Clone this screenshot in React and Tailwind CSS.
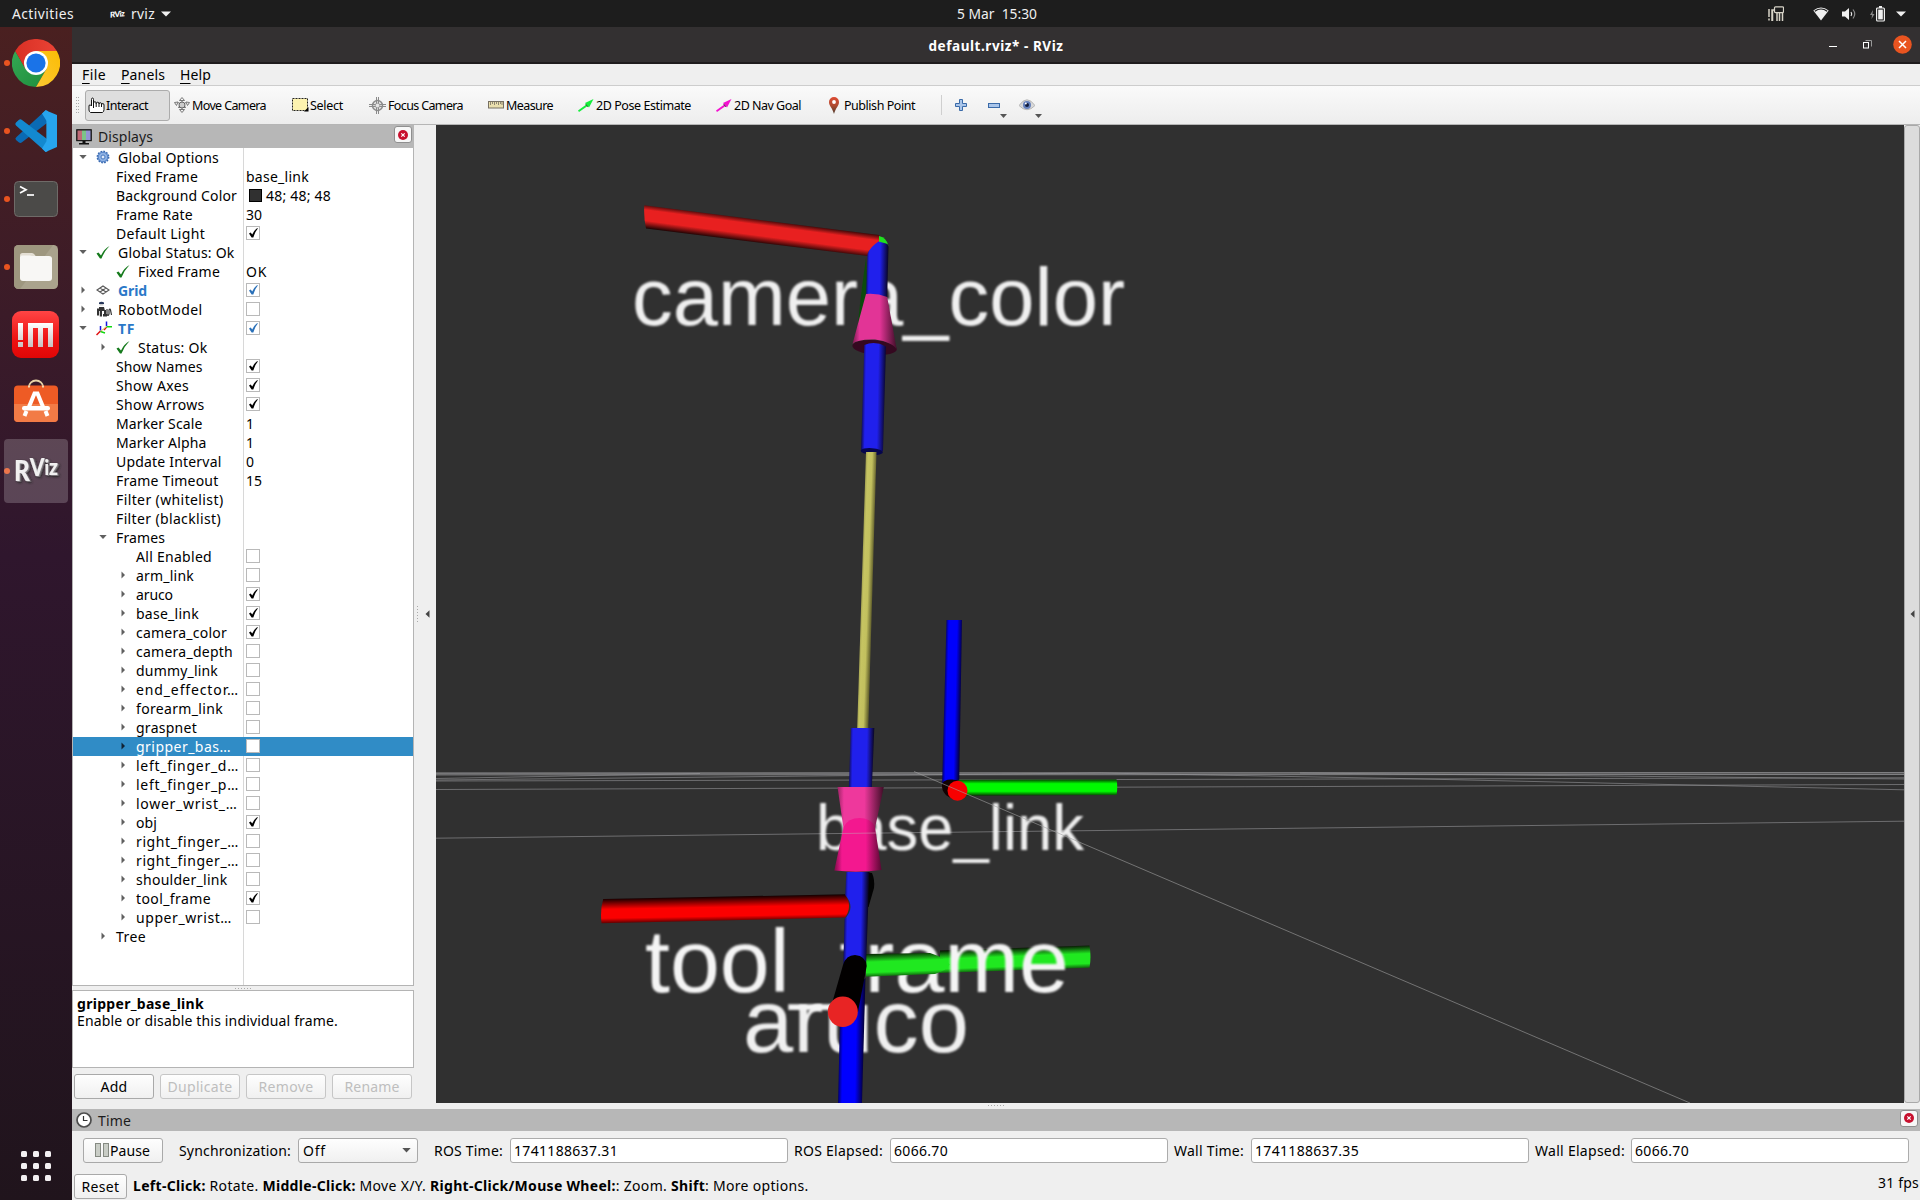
import { useLayoutEffect, useRef } from "react";

/* A single line of text tracked so that it takes exactly `w` pixels. */
function T({ w, children, className = "" }) {
  const ref = useRef(null);
  useLayoutEffect(() => {
    const el = ref.current;
    el.style.letterSpacing = "0px";
    const natural = el.getBoundingClientRect().width;
    const n = el.textContent.length;
    el.style.letterSpacing = `${(w - natural) / n}px`;
  }, [w, children]);
  return (
    <span ref={ref} className={`inline-block shrink-0 whitespace-pre ${className}`}>
      {children}
    </span>
  );
}

/* ---------- top bar ---------- */
function TopBar() {
  return (
    <header className="flex h-[27px] shrink-0 items-center bg-[#1d1d1d] text-[13.8px] leading-[27px] text-[#f0f0f0]">
      <div className="flex flex-1 items-center pl-3">
        <T w={62}>Activities</T>
        <span className="ml-9 mr-[7px] flex w-[14px] -skew-y-6 font-[Lato] text-[8px] font-black leading-[10px] tracking-[-0.6px] text-white">RViz</span>
        <T w={24}>rviz</T>
        <svg className="ml-1.5" width="10" height="6" viewBox="0 0 10 6"><path d="M0 0.5h10L5 5.5z" fill="#f0f0f0" /></svg>
      </div>
      <T w={80} className="ml-[76px]">{"5 Mar  15:30"}</T>
      <div className="flex flex-1 items-center justify-end pr-[14px]">
        <svg className="mr-[29px]" width="16" height="16" viewBox="0 0 16 16">
          <path d="M1 3v8M1 12.500v2M4 15V4h3M4.500 4v11M9 7v8M11.500 7v8M14.500 7v8" stroke="#d8d4c8" strokeWidth="1.500" fill="none" />
          <rect x="6.500" y="0.800" width="9" height="5.800" rx="1" stroke="#d8d4c8" fill="#1d1d1d" strokeWidth="1.200" />
        </svg>
        <svg className="mr-[13px]" width="16" height="14" viewBox="0 0 16 14">
          <path d="M8 13.500L0.300 3.500Q8 -2.500 15.700 3.500z" fill="#f0f0f0" />
          <path d="M1.800 4.300Q8 -0.300 14.200 4.300" stroke="#1d1d1d" strokeWidth="1.200" fill="none" />
        </svg>
        <svg className="mr-[13px]" width="15" height="14" viewBox="0 0 15 14">
          <path d="M0 4.500h3L7 1v12L3 9.500H0z" fill="#f0f0f0" />
          <path d="M9 5q1.500 2 0 4" stroke="#f0f0f0" strokeWidth="1.200" fill="none" />
          <path d="M11 2.500q3.500 4.500 0 9" stroke="#8a8a8a" strokeWidth="1.200" fill="none" />
        </svg>
        <svg className="mr-[11px]" width="15" height="16" viewBox="0 0 15 16">
          <path d="M3 4L0 9h2l-.5 4L4.500 8h-2z" fill="#8a8a8a" />
          <rect x="6.600" y="2" width="7.800" height="13" rx="1" stroke="#f0f0f0" strokeWidth="1.200" fill="none" />
          <rect x="9" y="0" width="3" height="2" fill="#f0f0f0" />
          <rect x="8.200" y="3.600" width="4.600" height="9.800" fill="#f0f0f0" />
        </svg>
        <svg width="10" height="6" viewBox="0 0 10 6"><path d="M0 0.500h10L5 5.500z" fill="#f0f0f0" /></svg>
      </div>
    </header>
  );
}

/* ---------- launcher ---------- */
function ChromeIcon() {
  return (
    <svg width="48" height="48" viewBox="0 0 48 48">
      <defs>
        <linearGradient id="cr" x1="0" x2="1"><stop offset="0" stopColor="#d93025" /><stop offset="1" stopColor="#ea4335" /></linearGradient>
        <linearGradient id="cg" x1="0" y1="0" x2="1" y2="1"><stop offset="0" stopColor="#34a853" /><stop offset="1" stopColor="#1e8e3e" /></linearGradient>
        <linearGradient id="cy" x1="0" y1="1" x2="1" y2="0"><stop offset="0" stopColor="#fcc934" /><stop offset="1" stopColor="#fbbc04" /></linearGradient>
      </defs>
      <path d="M24 24L13.600 30 3.200 12A24 24 0 0 0 24 48L34.400 30z" fill="url(#cg)" />
      <path d="M24 12H44.800A24 24 0 0 1 24 48L34.400 30z" fill="url(#cy)" />
      <path d="M24 12H44.800A24 24 0 0 0 3.200 12L13.600 30z" fill="url(#cr)" />
      <circle cx="24" cy="24" r="12" fill="#fff" />
      <circle cx="24" cy="24" r="9.600" fill="#1a73e8" />
    </svg>
  );
}

function CodeIcon() {
  return (
    <svg width="44" height="44" viewBox="0 0 44 44">
      <path d="M32 1L2.500 28Q0.500 29.500 2 31L5 33.500Q6.500 34.500 8 33.300L33 14z" fill="#0a6ab4" />
      <path d="M8 11Q6.500 9.800 5 10.800L2 13.400Q0.500 15 2 16.500L32 43 33 30z" fill="#1389cf" />
      <path d="M31.500 1.200L43 6v32L31.500 43Q33 41.500 32.600 38V6Q33 2.500 31.500 1.200z" fill="#27a5ee" />
      <path d="M31.500 1.200L28 4.500 32.600 12V32L28 39.500 31.500 43 34 42V2z" fill="#27a5ee" />
    </svg>
  );
}

function TerminalIcon() {
  return (
    <svg width="44" height="36" viewBox="0 0 44 36">
      <rect x="0.500" y="0.500" width="43" height="35" rx="4" fill="#4b4a48" stroke="#6f6b68" />
      <path d="M6 5.500l6 3.200-6 3.200" stroke="#fff" strokeWidth="1.700" fill="none" />
      <path d="M13 14h7" stroke="#fff" strokeWidth="1.700" />
    </svg>
  );
}

function FilesIcon() {
  return (
    <svg width="44" height="44" viewBox="0 0 44 44">
      <rect width="44" height="44" rx="4.500" fill="#aaa38d" />
      <path d="M4.500 0H39L6 44H4.500A4.500 4.500 0 0 1 0 39.500V4.500A4.500 4.500 0 0 1 4.500 0z" fill="#9b937c" opacity=".8" />
      <path d="M6 10.500Q6 8 8.500 8h9.500q1.500 0 2.500 1.500l1.500 2H6z" fill="#e4dfd4" />
      <rect x="6" y="11" width="32" height="25" rx="3" fill="#f8f7f5" />
      <path d="M6 20V12q0-1.500 2-1.500h8q2 0 3.500 1.500H35q3 0 3 3v5z" fill="#f8f7f5" />
    </svg>
  );
}

function ImIcon() {
  return (
    <svg width="47" height="47" viewBox="0 0 47 47">
      <defs>
        <linearGradient id="im" x1="0" x2="0" y1="0" y2="1"><stop offset="0" stopColor="#ff4545" /><stop offset=".6" stopColor="#ee1212" /><stop offset="1" stopColor="#e00606" /></linearGradient>
        <linearGradient id="im2" x1="0" x2="0" y1="0" y2="1"><stop offset="0" stopColor="#fff" /><stop offset="1" stopColor="#c8c0c0" /></linearGradient>
      </defs>
      <rect width="47" height="47" rx="9" fill="url(#im)" />
      <path d="M6 12h5v17H6zM6 31h5v5H6zM16 12h25v24h-5V17h-5v19h-5V17h-5v19h-5z" fill="url(#im2)" />
    </svg>
  );
}

function StoreIcon() {
  return (
    <svg width="46" height="44" viewBox="0 0 46 44">
      <path d="M16 8a7 6.500 0 0 1 14 0" stroke="#e8d3a6" strokeWidth="1.800" fill="none" />
      <rect x="1" y="6.500" width="44" height="36.500" rx="4" fill="#ee5b25" />
      <path d="M1 25h44v14a4 4 0 0 1-4 4H5a4 4 0 0 1-4-4z" fill="#f27b46" />
      <path d="M16 8.500V6.500M30 8.500V6.500" stroke="#f6e6c0" strokeWidth="1.800" />
      <path d="M15.500 29L21.500 14.500h3L30.500 29M13.500 32l-2 5M32.500 32l2 5" stroke="#fff" strokeWidth="4" fill="none" />
      <rect x="9" y="27" width="28" height="4.500" rx="2.200" fill="#fff" />
    </svg>
  );
}

function RvizIcon() {
  return (
    <svg width="52" height="36" viewBox="0 0 52 36">
      <defs>
        <filter id="rvshade" x="-10%" y="-10%" width="130%" height="130%">
          <feDropShadow dx="1.300" dy="0.800" stdDeviation="0.300" floodColor="#858085" />
          <feDropShadow dx="1" dy="1" stdDeviation="0.800" floodColor="#222" />
        </filter>
      </defs>
      <text x="4" y="28" fontFamily="Lato, sans-serif" fontWeight="900" fontSize="29" fill="#f0f0f0" textLength="44" lengthAdjust="spacingAndGlyphs" filter="url(#rvshade)">
        R<tspan dy="-5" fontSize="25">V</tspan><tspan dy="-1" fontSize="21">i</tspan><tspan fontSize="23">z</tspan>
      </text>
    </svg>
  );
}

function Launch({ dot = true, children }) {
  return (
    <div className="flex h-[68px] w-[72px] shrink-0 items-center">
      <span className={`ml-1 h-1.5 w-1.5 shrink-0 rounded-full ${dot ? "bg-[#e95420]" : ""}`} />
      <div className="-ml-[10px] flex w-[72px] shrink-0 justify-center">{children}</div>
    </div>
  );
}

function Sidebar() {
  return (
    <aside className="flex w-[72px] shrink-0 flex-col bg-linear-to-b from-[#4a2020] via-[#2f162d] via-45% to-[#20141c] pt-[2px]">
      <Launch><ChromeIcon /></Launch>
      <Launch><CodeIcon /></Launch>
      <Launch><TerminalIcon /></Launch>
      <Launch><FilesIcon /></Launch>
      <Launch dot={false}><div className="mr-px mb-px"><ImIcon /></div></Launch>
      <Launch dot={false}><div className="mb-1"><StoreIcon /></div></Launch>
      <Launch>
        <div className="flex h-16 w-16 items-center justify-center rounded bg-white/20"><RvizIcon /></div>
      </Launch>
      <div className="mt-auto mb-[19px] ml-[21px] grid w-[30px] grid-cols-3 gap-1.5">
        {Array.from({ length: 9 }, (_, i) => <span key={i} className="h-1.5 w-1.5 rounded-[1.5px] bg-[#f3f0f2]" />)}
      </div>
    </aside>
  );
}

/* ---------- window chrome ---------- */
function TitleBar() {
  return (
    <div className="flex h-[37px] shrink-0 items-center border-b-2 border-[#1f1c1d] bg-[#333031] text-white">
      <div className="flex flex-1 pl-[8.500px]" />
      <T w={135} className="mt-0.5 text-[13.500px] font-bold leading-[34px]">default.rviz* - RViz</T>
      <div className="flex flex-1 items-center justify-end pr-[8.500px]">
        <span className="mr-[26px] mt-1 h-px w-2 bg-white" />
        <svg className="mr-[20.500px]" width="9" height="9" viewBox="0 0 9 9">
          <path d="M2.500 .5h6v6" stroke="#999" fill="none" />
          <rect x="0.500" y="2.500" width="5" height="5.500" stroke="#fff" fill="none" />
        </svg>
        <svg width="19" height="19" viewBox="0 0 19 19">
          <circle cx="9.500" cy="9.500" r="9.300" fill="#e95420" />
          <path d="M6 6l7 7M13 6l-7 7" stroke="#fff" strokeWidth="1.500" />
        </svg>
      </div>
    </div>
  );
}

function MenuItem({ w, first, rest }) {
  return <T w={w}><span className="underline decoration-1 underline-offset-[3px]">{first}</span>{rest}</T>;
}

function MenuBar() {
  return (
    <nav className="flex h-[22px] shrink-0 items-center gap-[15px] border-b border-[#cdcdcd] bg-[#efefef] pl-[10px] text-[14px] leading-[21px]">
      <MenuItem w={24} first="F" rest="ile" />
      <MenuItem w={44} first="P" rest="anels" />
      <MenuItem w={31} first="H" rest="elp" />
    </nav>
  );
}

const HandIcon = () => (
  <svg width="17" height="17" viewBox="0 0 17 17"><path d="M5.500 11V2.500q0-1.500-1-1.500t-1 1.500V9L2.500 8Q1 7.500 1 9v4q0 1.500 1.500 2.500h12q1.500-1 1.500-3V8q0-1.500-1.200-1.500T13.500 8V7q0-1.300-1.200-1.300T11 7V6.500q0-1.300-1.200-1.300T8.200 6.500V6q0-1.200-1.200-1.200T5.700 5.500M8.200 6v4M11 6.500v3.500M13.500 7.500V10" fill="#fff" stroke="#111" strokeWidth="1" /></svg>
);
const MoveIcon = () => (
  <svg width="16" height="16" viewBox="0 0 16 16"><path d="M8 .5L10.500 3.500H5.500zM8 15.500L5.500 12.500h5zM.5 5.500L4 5 2.500 8.500zM15.500 5.500L12 5l1.500 3.500zM4 5.500l8 5M12 5.500l-8 5M8 3.500v9M4.500 10.500h7" fill="none" stroke="#777" /><circle cx="8" cy="8" r="3" fill="#ccc" stroke="#666" /></svg>
);
const SelectIcon = () => (
  <svg width="17" height="14" viewBox="0 0 17 14"><rect x=".5" y=".5" width="15" height="12" fill="#fdf3b0" stroke="#222" strokeDasharray="2 1" /><path d="M12 13.500h4.500V9z" fill="#000" /></svg>
);
const FocusIcon = () => (
  <svg width="17" height="17" viewBox="0 0 17 17"><g stroke="#8a8a8a" fill="none"><circle cx="8.500" cy="8.500" r="5" strokeWidth="1.500" fill="#e6e6e6" /><circle cx="8.500" cy="8.500" r="2.300" stroke="#999" /><path d="M7.500 0v6M9.500 0v6M7.500 11v6M9.500 11v6M0 7.500h6M0 9.500h6M11 7.500h6M11 9.500h6" /></g></svg>
);
const MeasureIcon = () => (
  <svg width="16" height="8" viewBox="0 0 16 8"><rect x=".5" y=".5" width="15" height="6.500" fill="#eadfae" stroke="#777062" /><path d="M2.500 1v3M4.500 1v2M6.500 1v3M8.500 1v2M10.500 1v3M12.500 1v2M14 1v3" stroke="#777062" strokeWidth=".8" /></svg>
);
const ArrowIcon = ({ color }) => (
  <svg width="16" height="13" viewBox="0 0 16 13"><path d="M15.500 0L7 4l1.300 1.500L0 11.500 1 13 9.700 7 11 8.500z" fill={color} /><path d="M7.500 5l2.500 3" stroke="#1a3a1a" strokeWidth=".7" /></svg>
);
const PinIcon = () => (
  <svg width="12" height="17" viewBox="0 0 12 17"><defs><linearGradient id="pin" x1="0" x2="0" y1="0" y2="1"><stop offset="0" stopColor="#dd4b33" /><stop offset=".5" stopColor="#b04a30" /><stop offset="1" stopColor="#4a3a2c" /></linearGradient></defs><path d="M6 0a5 5 0 0 1 5 5c0 4-3.500 6-5 12C4.500 11 1 9 1 5a5 5 0 0 1 5-5z" fill="url(#pin)" /><circle cx="6" cy="5" r="1.900" fill="#fff" /></svg>
);
const DropMark = ({ className }) => <svg className={`absolute -right-[7px] ${className}`} width="7" height="4" viewBox="0 0 7 4"><path d="M0 0h7L3.500 4z" fill="#555" /></svg>;

function Tool({ icon, w, label, className, gap = "gap-0.5" }) {
  return <div className={`flex shrink-0 items-center ${gap} ${className}`}>{icon}<T w={w} className="mt-0.5">{label}</T></div>;
}

function ToolBar() {
  return (
    <div className="flex h-[39px] shrink-0 items-center border-b border-[#b5b5b5] bg-linear-to-b from-[#fafafa] to-[#ededed] pl-[4px] text-[12.500px]">
      <div className="grid grid-cols-2 gap-x-[1px] gap-y-[2px]">
        {Array.from({ length: 12 }, (_, i) => <span key={i} className="h-px w-px bg-[#aaa]" />)}
      </div>
      <div className="ml-1.5 flex h-[31px] w-[85px] items-center gap-[1px] rounded-[3px] border border-[#acacac] bg-[#dedede] pl-0.5"><HandIcon /><T w={42} className="mt-0.5">Interact</T></div>
      <Tool className="ml-1 w-[118px]" icon={<MoveIcon />} w={74} label="Move Camera" />
      <Tool className="w-[77px]" gap="gap-[1px]" icon={<SelectIcon />} w={33} label="Select" />
      <Tool className="w-[119px]" icon={<FocusIcon />} w={75} label="Focus Camera" />
      <Tool className="w-[90px]" icon={<MeasureIcon />} w={47} label="Measure" />
      <Tool className="w-[138px]" icon={<ArrowIcon color="#16ee3c" />} w={95} label="2D Pose Estimate" />
      <Tool className="w-[112px]" icon={<ArrowIcon color="#f312cf" />} w={67} label="2D Nav Goal" />
      <Tool className="w-[113px]" gap="gap-1" icon={<PinIcon />} w={71} label="Publish Point" />
      <span className="h-5 w-px bg-[#cfcfcf]" />
      <svg className="ml-[13px]" width="12" height="12" viewBox="0 0 12 12"><path d="M4.500 .5h3v4h4v3h-4v4h-3v-4h-4v-3h4z" fill="#a9c5ea" stroke="#3a6aa8" /></svg>
      <div className="relative ml-[21px]"><svg width="12" height="5" viewBox="0 0 12 5"><rect x=".5" y=".5" width="11" height="4" fill="#a9c5ea" stroke="#3a6aa8" /></svg><DropMark className="-bottom-[10px]" /></div>
      <div className="relative ml-[19px]">
        <svg width="16" height="12" viewBox="0 0 16 12"><path d="M0 6.500Q8-5 16 6.500 8 15 0 6.500z" fill="#d9d9d9" stroke="#a5a5a5" strokeWidth=".7" /><circle cx="8" cy="6" r="4" fill="#6480bc" /><circle cx="8" cy="6" r="2" fill="#111c3c" /><circle cx="6.800" cy="4.500" r="1" fill="#fff" /></svg>
        <DropMark className="-bottom-[7px]" />
      </div>
    </div>
  );
}

/* ---------- displays tree ---------- */
const GearIcon = () => (
  <svg width="14" height="14" viewBox="0 0 14 14"><circle cx="7" cy="7" r="5.600" fill="#8fb2e4" stroke="#3a6ab0" strokeWidth="1.600" strokeDasharray="1.700 1.200" /><circle cx="7" cy="7" r="4.700" fill="#8fb2e4" stroke="#4a7ac0" strokeWidth=".8" /><circle cx="7" cy="7" r="2" fill="#dfeafa" stroke="#4a7ac0" /></svg>
);
const OkIcon = () => (
  <svg width="14" height="13" viewBox="0 0 14 13"><path d="M.5 7.500L2.500 6.500 5 9.500Q8 3 13.500 0 8.500 5 5.500 12.500H4z" fill="#157a1c" /></svg>
);
const GridIcon = () => (
  <svg width="14" height="10" viewBox="0 0 14 10"><path d="M7 1l6 4-6 4-6-4zM4 3l6 4M10 3L4 7" fill="none" stroke="#555" strokeWidth="1.100" /></svg>
);
const RobotIcon = () => (
  <svg width="16" height="16" viewBox="0 0 16 16"><path d="M3 1.500Q5.500 0 8 1.500V3H3z" fill="#26365a" /><path d="M3.500 3h4v1.500h-4z" fill="#ccc" /><path d="M3 6h5l1 4H3zM1 7.500h2v7H1zM3.800 10H6v5.500H3.800zM8 9h2v4H8zM7 13h4v2.500H7z" fill="#333" /><path d="M11 8v5q1 3 2 0V9q1-2 1.500 0L15.500 14" stroke="#333" strokeWidth="1.200" fill="none" /></svg>
);
const TfIcon = () => (
  <svg width="16" height="15" viewBox="0 0 16 15"><path d="M4.500 9.500V5M10.500 5V.5" stroke="#1515e0" strokeWidth="1.500" /><path d="M4.500 10L.5 14M10.500 6L8 9" stroke="#e01010" strokeWidth="1.500" /><path d="M4.500 10.500l4.500 1.500M10.500 5.700h5.500" stroke="#10d810" strokeWidth="1.500" /><path d="M5 10l5-4" stroke="#d8c860" strokeWidth="1" /></svg>
);
const icons = { gear: GearIcon, ok: OkIcon, grid: GridIcon, robot: RobotIcon, tf: TfIcon };

// [level, marker (o open, c closed, - none), icon, label, width, value, blue]
const rows = [
  [0, "o", "gear", "Global Options", 101],
  [1, "-", "", "Fixed Frame", 82, ["base_link", 63]],
  [1, "-", "", "Background Color", 121, ["48; 48; 48", 65, true]],
  [1, "-", "", "Frame Rate", 77, ["30", 16]],
  [1, "-", "", "Default Light", 89, true],
  [0, "o", "ok", "Global Status: Ok", 116.5],
  [1, "-", "ok", "Fixed Frame", 82, ["OK", 21]],
  [0, "c", "grid", "Grid", 29, true, true],
  [0, "c", "robot", "RobotModel", 84.5, false],
  [0, "o", "tf", "TF", 17, true, true],
  [1, "c", "ok", "Status: Ok", 69.5],
  [1, "-", "", "Show Names", 86.5, true],
  [1, "-", "", "Show Axes", 73, true],
  [1, "-", "", "Show Arrows", 88.5, true],
  [1, "-", "", "Marker Scale", 86.5, ["1", 8]],
  [1, "-", "", "Marker Alpha", 90.5, ["1", 8]],
  [1, "-", "", "Update Interval", 105.5, ["0", 8]],
  [1, "-", "", "Frame Timeout", 102.5, ["15", 16]],
  [1, "-", "", "Filter (whitelist)", 107.5],
  [1, "-", "", "Filter (blacklist)", 105],
  [1, "o", "", "Frames", 49],
  [2, "-", "", "All Enabled", 76, false],
  [2, "c", "", "arm_link", 58, false],
  [2, "c", "", "aruco", 37, true],
  [2, "c", "", "base_link", 63, true],
  [2, "c", "", "camera_color", 91, true],
  [2, "c", "", "camera_depth", 97, false],
  [2, "c", "", "dummy_link", 82, false],
  [2, "c", "", "end_effector…", 103, false],
  [2, "c", "", "forearm_link", 87, false],
  [2, "c", "", "graspnet", 61, false],
  [2, "c", "", "gripper_bas…", 95, false],
  [2, "c", "", "left_finger_d…", 103, false],
  [2, "c", "", "left_finger_p…", 103, false],
  [2, "c", "", "lower_wrist_…", 101.5, false],
  [2, "c", "", "obj", 21, true],
  [2, "c", "", "right_finger_…", 103, false],
  [2, "c", "", "right_finger_…", 103, false],
  [2, "c", "", "shoulder_link", 91.5, false],
  [2, "c", "", "tool_frame", 75, true],
  [2, "c", "", "upper_wrist…", 96, false],
  [1, "c", "", "Tree", 30],
];

const indent = ["w-[6px]", "w-[26px]", "w-[46px]"];

function Marker({ kind, dark }) {
  const fill = dark ? "#123" : "#606060";
  return (
    <svg className="shrink-0" width="8" height="8" viewBox="0 0 8 8">
      {kind === "o" && <path d="M.3 2h7.400L4 6z" fill={fill} />}
      {kind === "c" && <path d="M2.500 .5v7L6 4z" fill={fill} />}
    </svg>
  );
}

function Check({ on, blue }) {
  return (
    <span className="flex h-[14px] w-[14px] items-center justify-center border border-[#b9b9b9] bg-white">
      {on && <svg width="9" height="10" viewBox="0 0 9 10"><path d="M0 5.500L1.700 4.500 3.200 6.500Q5 2.500 8 .3H9Q6 4 4.300 9.500H2.600z" fill={blue ? "#2a70b8" : "#000"} /></svg>}
    </span>
  );
}

function Row({ r }) {
  const [level, kind, icon, label, w, value, blue] = r;
  const selected = label === "gripper_bas…";
  const Icon = icons[icon];
  return (
    <div className={`flex h-[19px] shrink-0 leading-[16px] ${selected ? "bg-[#308cc6] text-white" : ""}`}>
      <div className={`flex w-[171px] shrink-0 items-center border-r pb-px ${selected ? "border-[#308cc6]" : "border-[#d8d8d8]"}`}>
        <span className={`shrink-0 ${indent[level]}`} />
        <Marker kind={kind} dark={selected} />
        <span className="w-[9px] shrink-0" />
        {Icon && <span className="flex w-[22px] shrink-0 items-center"><Icon /></span>}
        <T w={w} className={blue ? "mt-0.5 font-bold text-[#2a78c8]" : "mt-0.5"}>{label}</T>
      </div>
      <div className="flex items-center pb-px pl-[2px]">
        {typeof value === "boolean" && <Check on={value} blue={blue} />}
        {Array.isArray(value) && (
          <>
            {value[2] && <span className="mr-[4px] ml-[3px] h-[13px] w-[13px] border border-black bg-[#303030]" />}
            <T w={value[1]} className="mt-0.5">{value[0]}</T>
          </>
        )}
      </div>
    </div>
  );
}

function DockClose() {
  return (
    <span className="flex h-[17px] w-[18px] items-center justify-center rounded-[3px] border border-[#8f8f8f] bg-[#f7f7f7]">
      <svg width="10" height="10" viewBox="0 0 10 10"><circle cx="5" cy="5" r="5" fill="#c8102e" /><path d="M3.300 3.300l3.400 3.400M6.700 3.300L3.300 6.700" stroke="#fff" strokeWidth="1.200" /></svg>
    </span>
  );
}

function Btn({ w, label, off, className = "" }) {
  return (
    <button className={`flex h-[25px] items-center justify-center rounded-[3px] border bg-linear-to-b from-[#fefefe] to-[#f0f0f0] leading-[22px] ${off ? "border-[#c6c6c6] text-[#bebebe]" : "border-[#a9a9a9]"} ${className}`}>
      <T w={w}>{label}</T>
    </button>
  );
}

const Dots = ({ className = "" }) => (
  <span className={`flex gap-[2px] ${className}`}>{Array.from({ length: 6 }, (_, i) => <i key={i} className="h-px w-px bg-[#aaa]" />)}</span>
);

function Displays() {
  return (
    <section className="flex w-[342px] shrink-0 flex-col pt-px">
      <div className="flex h-[23px] shrink-0 items-center bg-[#b7b7b7] pl-1 pr-[2px]">
        <svg width="16" height="16" viewBox="0 0 16 16">
          <rect x=".7" y=".7" width="14.600" height="11" fill="#222" stroke="#111" />
          <path d="M1.500 1.500h4.500v9.500H1.500z" fill="#c06a78" /><path d="M6 1.500h4v9.500H6z" fill="#7cc487" /><path d="M10 1.500h4.500v9.500H10z" fill="#9494d4" />
          <path d="M6.500 12h3v2h3.500v1.500H3V14h3.500z" fill="#111" />
        </svg>
        <T w={55} className="ml-1.5 text-[#1c1c1c]">Displays</T>
        <span className="ml-auto -mt-1"><DockClose /></span>
      </div>
      <div className="flex h-[838px] shrink-0 flex-col border border-t-0 border-[#b4b4b4] bg-white">
        {rows.map((r, i) => <Row key={i} r={r} />)}
        <div className="w-[171px] flex-1 border-r border-[#d8d8d8]" />
      </div>
      <div className="flex h-1 shrink-0 items-center justify-center"><Dots /></div>
      <div className="flex h-[78px] shrink-0 flex-col border border-[#b4b4b4] bg-white pl-1 pt-[4px] leading-[17px]">
        <T w={127} className="self-start font-bold">gripper_base_link</T>
        <T w={261} className="self-start">Enable or disable this individual frame.</T>
      </div>
      <div className="flex gap-1.5 pl-0.5 pt-1.5">
        <Btn className="w-20" w={27} label="Add" />
        <Btn className="w-20" w={65} label="Duplicate" off />
        <Btn className="w-20" w={55} label="Remove" off />
        <Btn className="w-20" w={55} label="Rename" off />
      </div>
    </section>
  );
}

/* ---------- 3D view ---------- */
/* Shading across a cylinder: dark rims and a lit band between `lo` and `hi`. */
function Along({ id, c, x1, y1, x2, y2, lo = 0.35, hi = 0.65 }) {
  return (
    <linearGradient id={id} gradientUnits="userSpaceOnUse" x1={x1} y1={y1} x2={x2} y2={y2}>
      <stop offset="0" stopColor="#050000" /><stop offset={lo} stopColor={c} /><stop offset={hi} stopColor={c} /><stop offset="1" stopColor="#050000" />
    </linearGradient>
  );
}

function Scene() {
  return (
    <svg className="block shrink-0" width="1468" height="978" viewBox="436 125 1468 978">
      <defs>
        <Along id="r1" c="#e82020" x1={757} y1={217} x2={753.500} y2={243.500} lo={0.280} hi={0.680} />
        <Along id="r2" c="#fb0000" x1={720} y1={896} x2={720.500} y2={924} lo={0.400} hi={0.720} />
        <Along id="g1" c="#20e820" x1={905} y1={951} x2={906} y2={979} lo={0.350} hi={0.720} />
        <Along id="g2" c="#20e820" x1={1030} y1={946.500} x2={1031} y2={973} lo={0.350} hi={0.720} />
        <Along id="g3" c="#00fa00" x1={1030} y1={778} x2={1030} y2={797} lo={0.300} hi={0.700} />
        <Along id="b1" c="#2020ec" x1={864} y1={270} x2={889.500} y2={270.500} lo={0.200} hi={0.620} />
        <Along id="b2" c="#2020ec" x1={860} y1={400} x2={887} y2={400.500} lo={0.200} hi={0.650} />
        <Along id="b3" c="#2020ec" x1={847} y1={757} x2={875} y2={757.500} lo={0.200} hi={0.700} />
        <Along id="b4" c="#2020ec" x1={842} y1={916} x2={869} y2={916.500} lo={0.200} hi={0.700} />
        <Along id="b5" c="#0000ff" x1={836} y1={1060} x2={866} y2={1060.500} lo={0.220} hi={0.650} />
        <Along id="b6" c="#0000fb" x1={942} y1={700} x2={962.500} y2={700.500} lo={0.250} hi={0.650} />
        <Along id="p1" c="#e23496" x1={845} y1={322} x2={903} y2={322} lo={0.250} hi={0.600} />
        <Along id="p2" c="#ee389c" x1={826} y1={806} x2={890} y2={806} lo={0.280} hi={0.600} />
        <Along id="p3" c="#f3188f" x1={826} y1={845} x2={890} y2={845} lo={0.250} hi={0.620} />
        <linearGradient id="y" gradientUnits="userSpaceOnUse" x1="-6" y1="0" x2="6" y2="0" gradientTransform="translate(866 590) skewX(-1.9)"><stop offset="0" stopColor="#8a8844" /><stop offset=".3" stopColor="#c6c462" /><stop offset=".65" stopColor="#c2c05e" /><stop offset="1" stopColor="#6a6830" /></linearGradient>
        <filter id="soft" x="-5%" y="-20%" width="110%" height="140%"><feGaussianBlur stdDeviation="0.9" /></filter>
      </defs>
      <rect x="436" y="125" width="1468" height="978" fill="#303030" />

      {/* ground grid */}
      <g stroke="#a0a0a4" fill="none" strokeOpacity=".55">
        <rect x="436" y="772" width="1468" height="3" fill="#a0a0a4" fillOpacity=".35" stroke="none" />
        <path d="M436 773.300L1904 772.500M436 775L1904 774.500M436 780L1100 773M436 781L1904 777.800M436 778.500L700 773.500" />
        <path d="M436 789.500L1904 784.500M1100 773L1400 778.500 1904 789.800M1300 773L1904 779M436 838.200L1904 821.200" />
      </g>

      <g fontFamily="Liberation Sans, sans-serif" fill="#efefef" filter="url(#soft)">
        <text x="632" y="325" fontSize="81" textLength="493" lengthAdjust="spacingAndGlyphs">camera_color</text>
        <text x="816" y="849.500" fontSize="64" textLength="268" lengthAdjust="spacingAndGlyphs">base_link</text>
        <text x="743" y="1051.500" fontSize="89" textLength="226" lengthAdjust="spacingAndGlyphs">aruco</text>
      </g>

      {/* base_link axes */}
      <path d="M946.500 620L962 620 959.200 782 942 787z" fill="url(#b6)" />
      <path d="M942 784Q944 779 952 779.500L962 781 958 800Q941 797 942 784z" fill="#120202" />
      <path d="M958 779.800L1116.500 779.300Q1118 787 1116.500 795L964 795.700z" fill="url(#g3)" />
      <circle cx="957.500" cy="790.700" r="10" fill="#f80000" />
      <path d="M914 771.500L1690 1103" stroke="#a0a0a0" strokeOpacity=".6" fill="none" />

      {/* camera_color axes and arrow */}
      <path d="M866 258L867.500 290 859 327 858 322Q862 285 866 258z" fill="#0c4a0c" />
      <path d="M644.300 205.300L879.300 235 879.300 242 867.500 256 646 228.500Q643.500 217 644.300 205.300z" fill="url(#r1)" />
      <path d="M879 236Q887 237.500 888.600 246.500L879 242.500z" fill="#20e020" />
      <path d="M867.500 254Q870 247 878.500 241.500L886 243.500Q889 244 888.500 247L887.200 297 866 295z" fill="url(#b1)" />
      <ellipse cx="874.600" cy="347.500" rx="22.300" ry="7.200" transform="rotate(5 874.600 347.500)" fill="#350820" />
      <path d="M866 294Q877 293 887.200 297L896.800 350Q893 342 875 339.500 857 339 852.500 344z" fill="url(#p1)" />
      <path d="M864.300 345Q875 340.500 886 346.500L883 451H861z" fill="url(#b2)" />
      <ellipse cx="871.800" cy="451.500" rx="11.200" ry="3.300" transform="rotate(4 871.800 451.500)" fill="#06064c" />
      <path d="M866 452L876.500 452 868.200 728 857.200 728z" fill="url(#y)" />
      <path d="M850.800 728L874.300 728 871.800 790 848.800 790z" fill="url(#b3)" />

      {/* tool_frame axes */}
      <path d="M866 872L872 873Q875 880 874 888L868.500 907H866z" fill="#030303" />
      <path d="M940 950.500L1089.500 945.500Q1091.500 957 1089.500 967.700L940 973z" fill="url(#g2)" />
      <g fontFamily="Liberation Sans, sans-serif" fill="#f4f4f4" filter="url(#soft)">
        <text x="645" y="991.500" fontSize="89" textLength="424" lengthAdjust="spacingAndGlyphs">tool_frame</text>
      </g>
      <path d="M865 954L930 953Q946 958 949.600 964.500 946 971 935 974L866 976.700z" fill="url(#g1)" />
      <path d="M603.200 899L845 894.300Q853 906 845 917.500L601.500 923.300Q600 910 603.200 899z" fill="url(#r2)" />
      <path d="M840.500 1000L865.500 978 862 1103H838z" fill="url(#b5)" />
      <path d="M846.300 872L869.400 872 866 968 843.200 968 844.500 919 Q850.500 913 850.500 907 850.500 901 845.200 895z" fill="url(#b4)" />

      <path d="M837.500 787L883.800 787 874.800 829 843.600 829z" fill="url(#p2)" />
      <path d="M843.600 827Q848 818 859.600 818 870 818 874.800 826L881.500 870Q858 873 834.300 870.500z" fill="url(#p3)" />
      <path d="M842 833.500L876 833" stroke="#d07aa8" strokeOpacity=".7" />
      <path d="M843 965Q846 955 855 955 866 956 866.700 966L858 1012H829.500z" fill="#020000" />
      <ellipse cx="842.800" cy="1011.700" rx="15" ry="15.300" fill="#e82424" />
    </svg>
  );
}

/* ---------- bottom panels ---------- */
function Field({ label, lw, value, vw, className }) {
  return (
    <div className={`flex shrink-0 items-center justify-between ${className}`}>
      <T w={lw}>{label}</T>
      <div className="flex h-[25px] w-[278px] items-center rounded-[3px] border border-[#acacac] bg-white pl-[3px] leading-[22px]"><T w={vw}>{value}</T></div>
    </div>
  );
}

function TimePanel() {
  return (
    <section className="flex shrink-0 flex-col">
      <div className="flex h-[22px] items-center bg-[#b7b7b7] pl-1 pr-0.5">
        <svg width="16" height="16" viewBox="0 0 16 16"><circle cx="8" cy="8" r="7" fill="#fff" stroke="#4c4c4c" strokeWidth="1.700" /><path d="M7.500 4v4.500h4" stroke="#333" strokeWidth="1.200" fill="none" /></svg>
        <T w={33} className="ml-1.5 text-[#1c1c1c]">Time</T>
        <span className="ml-auto -mt-1"><DockClose /></span>
      </div>
      <div className="flex h-[39px] items-center pl-[11px] leading-[24px]">
        <button className="flex h-[25px] w-20 items-center rounded-[3px] border border-[#a9a9a9] bg-linear-to-b from-[#fefefe] to-[#f0f0f0] pl-[11px] leading-[22px]">
          <svg width="15" height="15" viewBox="0 0 15 15"><g fill="#c9cdc6" stroke="#858a82"><rect x=".5" y=".5" width="5" height="13" /><rect x="8.500" y=".5" width="5" height="13" /></g></svg>
          <T w={40}>Pause</T>
        </button>
        <T w={112} className="ml-4">Synchronization:</T>
        <div className="ml-[7px] flex h-[25px] w-[120px] items-center justify-between rounded-[3px] border border-[#a9a9a9] bg-linear-to-b from-[#fefefe] to-[#f0f0f0] pl-1 pr-[6px] leading-[22px]">
          <T w={23}>Off</T>
          <svg width="9" height="5" viewBox="0 0 9 5"><path d="M.3 0h8.400L4.500 4.500z" fill="#555" /></svg>
        </div>
        <Field className="ml-4 w-[354px]" label="ROS Time:" lw={69} value="1741188637.31" vw={104} />
        <Field className="ml-1.5 w-[374px]" label="ROS Elapsed:" lw={89} value="6066.70" vw={54} />
        <Field className="ml-1.5 w-[355px]" label="Wall Time:" lw={70} value="1741188637.35" vw={104} />
        <Field className="ml-1.5 w-[374px]" label="Wall Elapsed:" lw={90} value="6066.70" vw={54} />
      </div>
    </section>
  );
}

function StatusBar() {
  return (
    <footer className="flex h-[30px] shrink-0 items-start pl-0.5 pt-1">
      <Btn className="w-[53px]" w={38} label="Reset" />
      <div className="ml-1.5 mt-0.5 flex leading-[20px]">
        <T w={675.500}><b>Left-Click:</b> Rotate. <b>Middle-Click:</b> Move X/Y. <b>Right-Click/Mouse Wheel:</b>: Zoom. <b>Shift</b>: More options.</T>
      </div>
      <T w={41} className="-mt-px ml-auto mr-px leading-[20px]">31 fps</T>
    </footer>
  );
}

export default function App() {
  return (
    <div className="flex h-[1200px] w-[1920px] flex-col overflow-hidden bg-[#efefef] font-['Noto_Sans',sans-serif] text-[14px] text-black">
      <TopBar />
      <div className="flex min-h-0 flex-1">
        <Sidebar />
        <main className="flex min-w-0 flex-1 flex-col">
          <TitleBar />
          <MenuBar />
          <ToolBar />
          <div className="-mt-px flex h-[979px] shrink-0">
            <Displays />
            <div className="flex w-[22px] shrink-0 items-center justify-end gap-[7px] pr-[6px]">
              <div className="flex flex-col gap-[2px]">{Array.from({ length: 6 }, (_, i) => <i key={i} className="h-px w-px bg-[#aaa]" />)}</div>
              <svg width="5" height="8" viewBox="0 0 5 8"><path d="M4.500 .3v7.400L.5 4z" fill="#444" /></svg>
            </div>
            <div className="flex pt-px"><Scene /></div>
            <div className="mt-px flex w-4 items-center justify-center rounded-[3px] border border-[#a9a9a9] bg-[#dcdcdc]">
              <svg width="5" height="8" viewBox="0 0 5 8"><path d="M4.500 .3v7.400L.5 4z" fill="#444" /></svg>
            </div>
          </div>
          <div className="flex h-1.5 shrink-0 justify-center pt-[2px]"><Dots /></div>
          <TimePanel />
          <StatusBar />
        </main>
      </div>
    </div>
  );
}
